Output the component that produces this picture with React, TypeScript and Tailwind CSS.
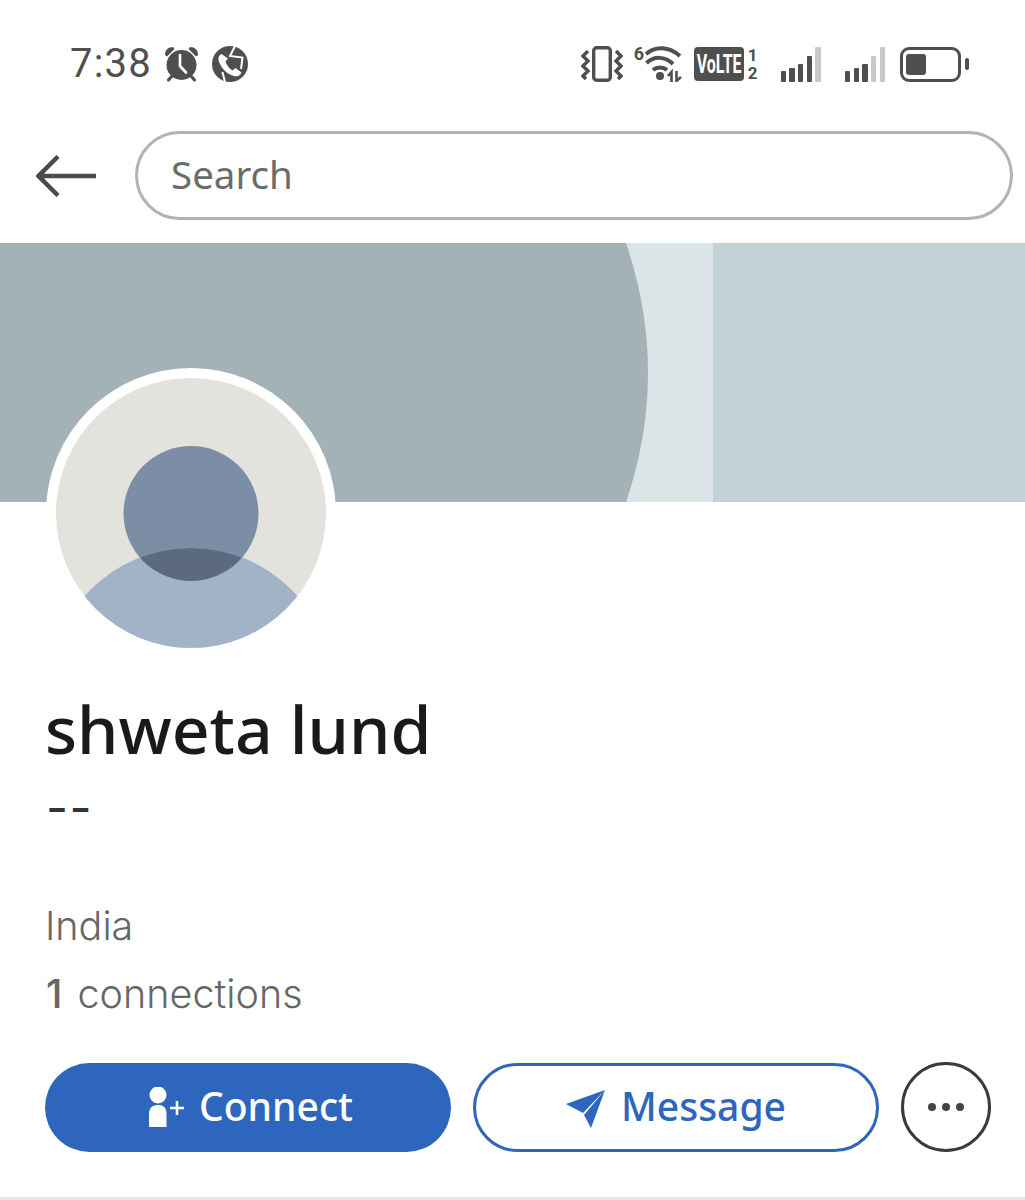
import React from 'react';

const AlarmIcon = () => (
    <svg width="36" height="36" viewBox="0 0 36 36" fill="#4f4f4f">
        <circle cx="17.5" cy="19" r="15" />
        <path d="M1 9 C1 4 4 1 9 1 L10.5 3 L3 10.5 Z" />
        <path d="M34 9 C34 4 31 1 26 1 L24.5 3 L32 10.5 Z" />
        <path d="M8 30 L4.5 34 M27 30 L30.5 34" stroke="#4f4f4f" strokeWidth="3" strokeLinecap="round" />
        <path d="M16 9 V20 L22 26.5" stroke="#fff" strokeWidth="2.6" fill="none" strokeLinecap="round" strokeLinejoin="round" />
    </svg>
);

const CallIcon = () => (
    <svg width="36" height="38" viewBox="0 0 36 38">
        <circle cx="18" cy="19" r="18" fill="#4f4f4f" />
        <path d="M9.5 9 C5.5 11 6 15 8 19 C11 25 16 29.5 22 31 C26 32 28.5 30 29.5 27.5 L23.5 23 L20.5 25.5 C17 23.5 14.5 20 13.5 16.5 L16 13.5 Z" fill="#fff" />
        <path d="M23 1 L18 11 L30.5 12.5 L29 24" stroke="#fff" strokeWidth="2" fill="none" />
        <path d="M10.5 27 L13 37" stroke="#fff" strokeWidth="2" fill="none" />
    </svg>
);

const VibrateIcon = () => (
    <svg width="42" height="36" viewBox="0 0 42 36" fill="none" stroke="#4f4f4f">
        <rect x="12.7" y="1.7" width="16.6" height="32.6" rx="3" strokeWidth="3.4" />
        <path d="M7 5 L2 10 L7 15 L2 20 L7 25 L2 30 L5 33" strokeWidth="3.4" />
        <path d="M35 5 L40 10 L35 15 L40 20 L35 25 L40 30 L37 33" strokeWidth="3.4" />
    </svg>
);

const WifiIcon = () => (
    <svg width="38" height="36" viewBox="0 0 38 36" fill="none" stroke="#4f4f4f" strokeWidth="4">
        <path d="M2 8 C12 -0.5 25 0.5 36 10" />
        <path d="M2.5 17 C10 10 21 10 29 18" />
        <path d="M9 24 C13 20.5 19 20.5 23 24" />
        <circle cx="16" cy="30" r="4" fill="#4f4f4f" stroke="none" />
        <path d="M27.5 36 V26 L24 30 M32.5 25 V35 L37 31" strokeWidth="2.6" />
    </svg>
);

const Signal = ({ lit }: { lit: number }) => (
    <div className="flex items-end gap-[3.3px] h-[35px]">
        {[11, 14, 18, 26, 35].map((h, i) => (
            <div
                key={i}
                className="w-[5.4px] rounded-[1px]"
                style={{ height: h, background: i < lit ? '#4f4f4f' : '#c8c8c8' }}
            />
        ))}
    </div>
);

const StatusBar = () => (
    <div className="h-[128px] flex items-center justify-between pl-[70px] pr-[56px]">
        <div className="flex items-center">
            <span className="font-['Roboto'] text-[40px] tracking-[1.2px] text-[#4f4f4f] leading-none">7:38</span>
            <div className="ml-[12px] flex items-center gap-[12px]">
                <AlarmIcon />
                <CallIcon />
            </div>
        </div>
        <div className="flex items-center">
            <VibrateIcon />
            <span className="ml-[11px] self-start mt-[-1px] text-[18px] leading-[18px] font-bold text-[#4f4f4f] font-['Roboto'] w-[10px]">6</span>
            <WifiIcon />
            <div className="ml-[12px] w-[50px] h-[34px] rounded-[4px] bg-[#4f4f4f] flex items-center justify-center">
                <span className="font-['Roboto'] font-bold text-white text-[25px] leading-none scale-x-[0.64]">VoLTE</span>
            </div>
            <div className="ml-[4px] w-[10px] flex flex-col items-center font-['Roboto'] font-bold text-[17px] leading-[18px] text-[#4f4f4f]">
                <span>1</span>
                <span>2</span>
            </div>
            <div className="ml-[23px]">
                <Signal lit={4} />
            </div>
            <div className="ml-[24px]">
                <Signal lit={3} />
            </div>
            <div className="ml-[15px] flex items-center">
                <div className="w-[61px] h-[35px] rounded-[9px] border-[3px] border-[#4f4f4f] py-[4px] px-[3px]">
                    <div className="w-[20px] h-full rounded-[3px] bg-[#4f4f4f]" />
                </div>
                <div className="ml-[4px] w-[4px] h-[12px] rounded-[2px] bg-[#4f4f4f]" />
            </div>
        </div>
    </div>
);

const SearchRow = () => (
    <div className="h-[115px] pt-[3px] flex items-start pl-[36px] pr-[12px]">
        <svg className="mt-[24px]" width="60" height="42" viewBox="0 0 60 42" fill="none" stroke="#4a4a4a" strokeWidth="4.5">
            <path d="M60 21 H3 M22 1.5 L2.5 21 L22 40.5" />
        </svg>
        <div className="ml-[39px] flex-1 h-[89px] rounded-full border-[3px] border-[#b3b3b3] flex items-center pl-[33px] pb-[3px]">
            <span className="text-[38.5px] text-[#6b6b6b] leading-none">Search</span>
        </div>
    </div>
);

const Cover = () => (
    <svg className="block" width="1025" height="259" viewBox="0 0 1025 259">
        <rect width="1025" height="259" fill="#c2d1d6" />
        <rect width="713" height="259" fill="#dbe4e7" />
        <path d="M0 0 H626 Q670 130 626 259 H0 Z" fill="#a3b2b6" />
    </svg>
);

const Avatar = () => (
    <svg className="block" width="290" height="290" viewBox="0 0 290 290">
        <defs>
            <clipPath id="inner">
                <circle cx="145" cy="145" r="135" />
            </clipPath>
            <clipPath id="head">
                <circle cx="145" cy="145.5" r="67.5" />
            </clipPath>
        </defs>
        <circle cx="145" cy="145" r="145" fill="#fff" />
        <circle cx="145" cy="145" r="135" fill="#e4e2dd" />
        <circle cx="145" cy="145.5" r="67.5" fill="#7b8ea6" />
        <g clipPath="url(#inner)">
            <circle cx="145" cy="322" r="142" fill="#a2b3c8" />
        </g>
        <g clipPath="url(#head)">
            <circle cx="145" cy="322" r="142" fill="#5b6a7e" />
        </g>
    </svg>
);

const App = () => {
    return (
        <div className="w-[1025px] h-[1200px] bg-white overflow-hidden flex flex-col font-['Noto_Sans',sans-serif]">
            <StatusBar />
            <SearchRow />
            <Cover />
            <div className="flex-1 flex flex-col">
                <div className="-mt-[134px] ml-[46px] relative">
                    <Avatar />
                </div>
                <div className="pl-[45px] mt-[28px] text-[66px] leading-[84px] font-medium text-[#1a1a1a]">shweta lund</div>
                <div className="pl-[46px] mt-[18px] h-[40px] font-['Inter'] text-[48px] leading-[40px] tracking-[1.5px] text-[#333333]">--</div>
                <div className="pl-[45px] mt-[73px] font-['Inter'] font-light text-[39.5px] leading-[50px] text-[#666666]">India</div>
                <div className="pl-[46px] mt-[18px] font-['Inter'] font-light text-[39.5px] leading-[50px] text-[#666666]">
                    <span className="font-medium">1</span>
                    <span className="ml-[4px]"> connections</span>
                </div>
                <div className="mt-[43px] pl-[45px] flex items-center">
                    <button className="w-[406px] h-[89px] pl-[6px] rounded-full bg-[#2d66bc] flex items-center justify-center text-white text-[39px] font-medium">
                        <svg width="36" height="40" viewBox="0 0 36 40" fill="#fff">
                            <circle cx="9" cy="8" r="8.5" />
                            <path d="M0 40 V27 C0 20 4 18 9 18 C14 18 17.5 20 17.5 27 V40 Z" />
                            <path d="M21 21 H35 M28 14 V28" stroke="#fff" strokeWidth="2.5" fill="none" />
                        </svg>
                        <span className="ml-[14px] mb-[2px]">Connect</span>
                    </button>
                    <button className="ml-[22px] w-[406px] h-[89px] rounded-full border-[3px] border-[#2d66bc] flex items-center justify-center text-[#2d66bc] text-[39px] font-medium">
                        <svg className="mt-[4px]" width="40" height="40" viewBox="0 0 40 40" fill="#2d66bc">
                            <path d="M0 15 L39 1 L17 24 Z" />
                            <path d="M39 1 L25 39 L18 26 Z" />
                        </svg>
                        <span className="ml-[15px] mb-[2px]">Message</span>
                    </button>
                    <button className="ml-[22px] w-[90px] h-[90px] rounded-full border-[3px] border-[#3a3a3a] flex items-center justify-center gap-[6px]">
                        <span className="w-[8px] h-[8px] rounded-full bg-[#444444]" />
                        <span className="w-[8px] h-[8px] rounded-full bg-[#444444]" />
                        <span className="w-[8px] h-[8px] rounded-full bg-[#444444]" />
                    </button>
                </div>
                <div className="mt-auto h-[3px] bg-[#e9e8e2]" />
            </div>
        </div>
    );
};

export default App;
